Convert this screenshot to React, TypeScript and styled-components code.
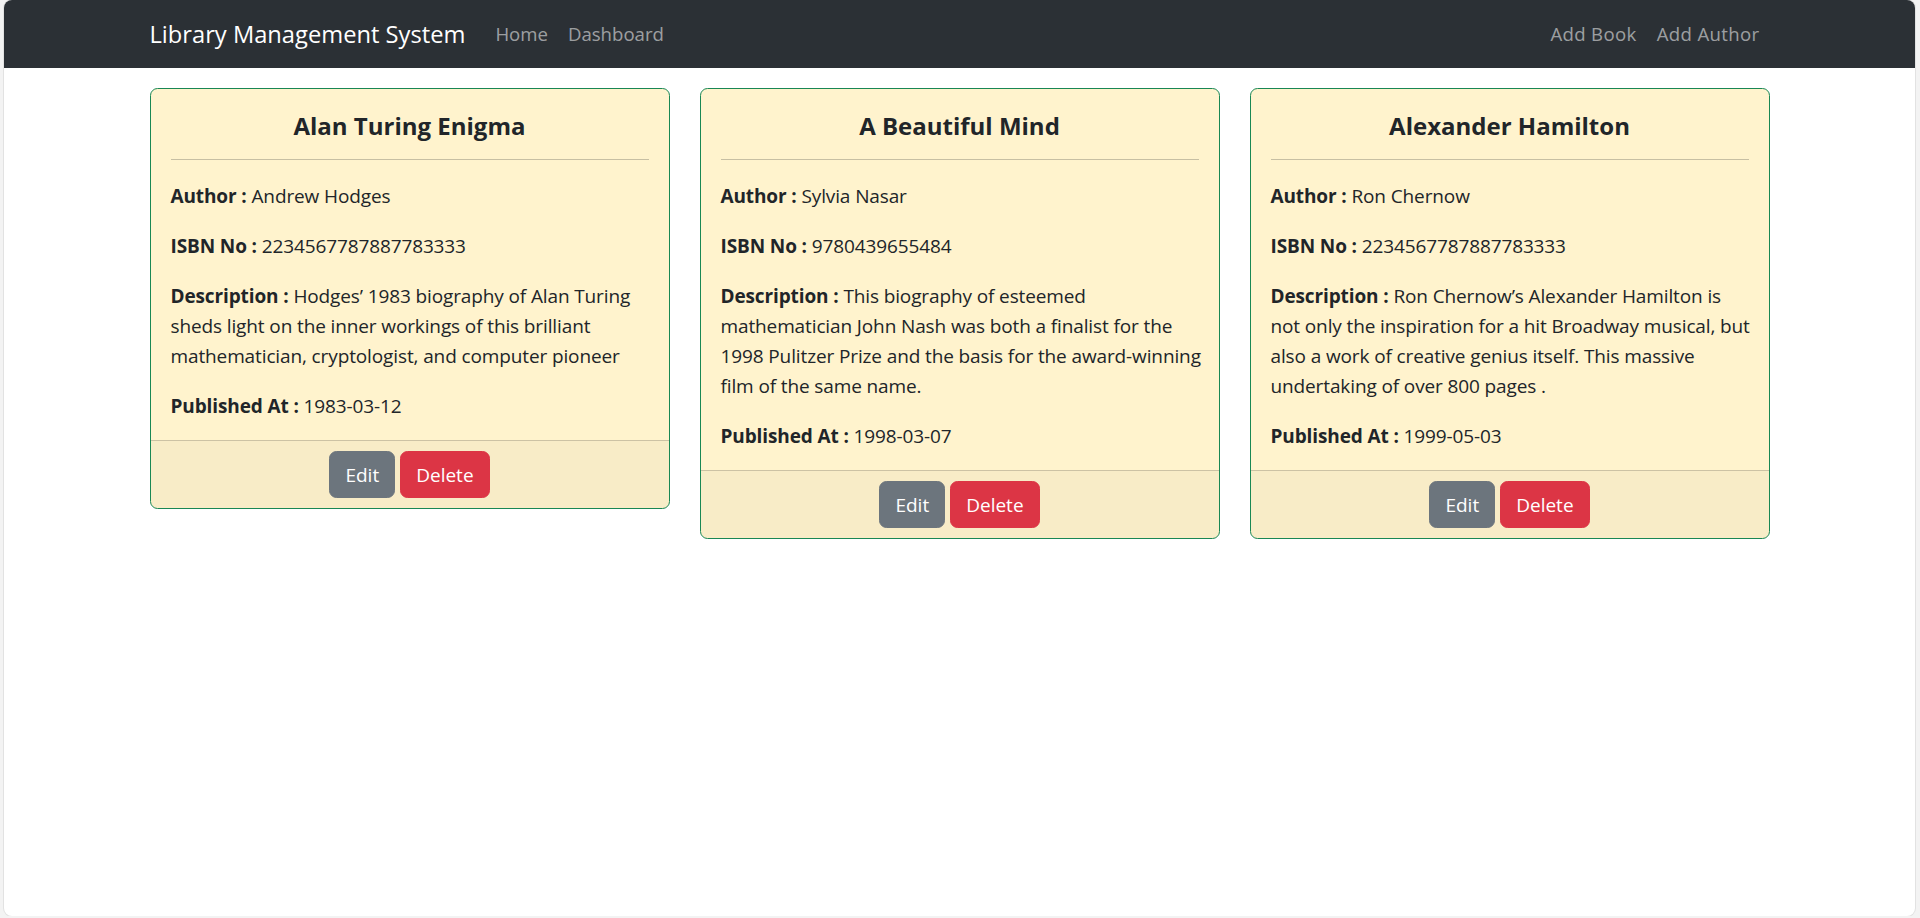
import React from "react";
import styled, { createGlobalStyle } from "styled-components";

const GlobalStyle = createGlobalStyle`
  html, body {
    margin: 0;
    padding: 0;
    background: #f3f3f3;
  }
  body {
    font-family: "Open Sans", "Noto Sans", "Liberation Sans", sans-serif;
    color: #212529;
  }
  * { box-sizing: border-box; }
`;

const Frame = styled.div`
  margin-left: 4px;
  width: 1911px;
  height: 916px;
  background: #ffffff;
  border-radius: 8px;
  overflow: hidden;
  box-shadow: 0 0 0 1px #e2e2e2;
`;

const Navbar = styled.nav`
  height: 68px;
  background: #2b3035;
  display: flex;
  align-items: center;
`;

const Container = styled.div`
  width: 1620px;
  margin: 0 auto;
`;

const NavInner = styled(Container)`
  display: flex;
  align-items: center;
`;

const Brand = styled.a`
  font-size: 23.7px;
  line-height: 37px;
  color: #ffffff;
  margin-right: 20px;
  text-decoration: none;
  white-space: nowrap;
`;

const NavList = styled.ul<{ $end?: boolean }>`
  display: flex;
  list-style: none;
  margin: 0;
  padding: 0;
  margin-left: ${(p) => (p.$end ? "auto" : "0")};
`;

const NavLink = styled.a<{ $wide?: boolean }>`
  display: block;
  padding: 10px;
  font-size: 18.6px;
  line-height: 30px;
  letter-spacing: ${(p) => (p.$wide ? "0.35px" : "0")};
  color: rgba(255, 255, 255, 0.55);
  text-decoration: none;
  white-space: nowrap;
`;

const CardGrid = styled(Container)`
  display: grid;
  grid-template-columns: repeat(3, 1fr);
  column-gap: 30px;
  align-items: start;
  margin-top: 20px;
`;

const Card = styled.div`
  border: 1px solid #198754;
  border-radius: 7.5px;
  background: #fff3cd;
  overflow: hidden;
`;

const CardBody = styled.div`
  padding: 20px 20px 19px;
`;

const Title = styled.h4`
  margin: 0;
  font-size: 24px;
  line-height: 33px;
  font-weight: 700;
  text-align: center;
  color: #212529;
`;

const Divider = styled.hr`
  margin: 17px 0 21px;
  border: 0;
  border-top: 1px solid #212529;
  opacity: 0.25;
`;

const Field = styled.p<{ $last?: boolean }>`
  margin: 0 0 ${(p) => (p.$last ? "0" : "20px")};
  font-size: 19px;
  line-height: 30px;
  letter-spacing: -0.12px;
  white-space: nowrap;
`;

const Label = styled.b`
  font-weight: 700;
`;

const CardFooter = styled.div`
  background: rgba(33, 37, 41, 0.03);
  border-top: 1px solid rgba(0, 0, 0, 0.175);
  padding: 10px 20px;
  display: flex;
  justify-content: center;
  gap: 5px;
`;

const Button = styled.button<{ $variant: "secondary" | "danger" }>`
  font-family: inherit;
  font-size: 19px;
  line-height: 30px;
  padding: 7.5px 15px;
  border-radius: 7.5px;
  border: 1px solid ${(p) => (p.$variant === "danger" ? "#dc3545" : "#6c757d")};
  background: ${(p) => (p.$variant === "danger" ? "#dc3545" : "#6c757d")};
  color: #ffffff;
  cursor: pointer;
`;

type Book = {
  title: string;
  author: string;
  isbn: string;
  description: string[];
  published: string;
};

const books: Book[] = [
  {
    title: "Alan Turing Enigma",
    author: "Andrew Hodges",
    isbn: "2234567787887783333",
    description: [
      "Hodges’ 1983 biography of Alan Turing",
      "sheds light on the inner workings of this brilliant",
      "mathematician, cryptologist, and computer pioneer",
    ],
    published: "1983-03-12",
  },
  {
    title: "A Beautiful Mind",
    author: "Sylvia Nasar",
    isbn: "9780439655484",
    description: [
      "This biography of esteemed",
      "mathematician John Nash was both a finalist for the",
      "1998 Pulitzer Prize and the basis for the award-winning",
      "film of the same name.",
    ],
    published: "1998-03-07",
  },
  {
    title: "Alexander Hamilton",
    author: "Ron Chernow",
    isbn: "2234567787887783333",
    description: [
      "Ron Chernow’s Alexander Hamilton is",
      "not only the inspiration for a hit Broadway musical, but",
      "also a work of creative genius itself. This massive",
      "undertaking of over 800 pages .",
    ],
    published: "1999-05-03",
  },
];

function BookCard({ book }: { book: Book }) {
  return (
    <Card>
      <CardBody>
        <Title>{book.title}</Title>
        <Divider />
        <Field>
          <Label>Author :</Label> {book.author}
        </Field>
        <Field>
          <Label>ISBN No :</Label> {book.isbn}
        </Field>
        <Field>
          <Label>Description :</Label>{" "}
          {book.description.map((line, i) => (
            <React.Fragment key={i}>
              {i > 0 && <br />}
              {line}
            </React.Fragment>
          ))}
        </Field>
        <Field $last>
          <Label>Published At :</Label> {book.published}
        </Field>
      </CardBody>
      <CardFooter>
        <Button $variant="secondary">Edit</Button>
        <Button $variant="danger">Delete</Button>
      </CardFooter>
    </Card>
  );
}

export default function App() {
  return (
    <>
      <GlobalStyle />
      <Frame>
        <Navbar>
          <NavInner>
            <Brand href="#">Library Management System</Brand>
            <NavList>
              <li><NavLink href="#">Home</NavLink></li>
              <li><NavLink href="#">Dashboard</NavLink></li>
            </NavList>
            <NavList $end>
              <li><NavLink href="#" $wide>Add Book</NavLink></li>
              <li><NavLink href="#" $wide>Add Author</NavLink></li>
            </NavList>
          </NavInner>
        </Navbar>
        <CardGrid>
          {books.map((b) => (
            <BookCard key={b.title} book={b} />
          ))}
        </CardGrid>
      </Frame>
    </>
  );
}
